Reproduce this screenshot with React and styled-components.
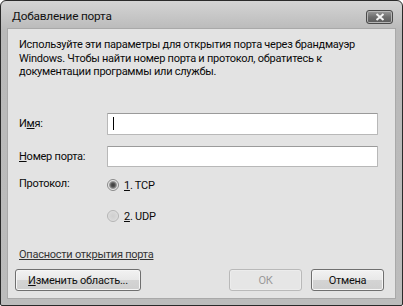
import React from "react";
import styled, { createGlobalStyle } from "styled-components";

const Global = createGlobalStyle`
  html, body { margin: 0; padding: 0; background: #ffffff; }
  body { font-family: Roboto, "Liberation Sans", sans-serif; }
`;

const Window = styled.div`
  box-sizing: border-box;
  width: 403px;
  height: 306px;
  border: 1px solid #2a2a2a;
  border-radius: 6px 6px 2px 2px;
  background: linear-gradient(#d4d4d4, #b9b9b9 30px, #bcbcbc);
  display: flex;
  flex-direction: column;
  overflow: hidden;
`;

const TitleBar = styled.div`
  height: 27px;
  display: flex;
  align-items: center;
  justify-content: space-between;
  padding: 0 9px 0 11px;
`;

const Title = styled.span`
  font-size: 11.8px;
  letter-spacing: -0.2px;
  color: #111;
  margin-top: 2px;
`;

const CloseBtn = styled.div`
  width: 25px;
  height: 12px;
  border: 1px solid #4a4a4a;
  border-radius: 3px;
  background: linear-gradient(#9a9a9a, #6e6e6e 50%, #5a5a5a);
  display: flex;
  align-items: center;
  justify-content: center;
  margin-top: 4px;
  box-shadow: inset 0 0 0 1px #b5b5b5;
`;

const Client = styled.div`
  flex: 1;
  margin: 0 6px 6px 6px;
  background: #e3e3e3;
  border: 1px solid #a9a9a9;
  display: flex;
  flex-direction: column;
  padding: 9px 11px 7px 11px;
  font-size: 11px;
  letter-spacing: -0.25px;
  color: #0a0a0a;
`;

const Intro = styled.p`
  margin: 0;
  line-height: 13.5px;
`;

const Form = styled.div`
  margin-top: 34px;
  display: grid;
  grid-template-columns: 88px 271px;
  row-gap: 11px;
  align-items: center;
`;

const Label = styled.span``;

const Ul = styled.span`
  text-decoration: underline;
`;

const Input = styled.div`
  box-sizing: border-box;
  height: ${(p) => p.$h}px;
  background: #ffffff;
  border: 1px solid #b8b8b8;
  border-top-color: #9a9a9a;
  border-radius: 1px;
  display: flex;
  align-items: center;
  padding-left: 5px;
`;

const Caret = styled.span`
  width: 1px;
  height: 13px;
  background: #000;
`;

const ProtoRow = styled.div`
  display: grid;
  grid-template-columns: 88px 1fr;
  margin-top: 9px;
`;

const ProtoLabel = styled.span`
  margin-top: 1px;
`;

const RadioList = styled.div`
  display: flex;
  flex-direction: column;
  gap: 18px;
  margin-top: 3px;
`;

const RadioItem = styled.label`
  display: flex;
  align-items: center;
  gap: 5px;
`;

const RadioCircle = styled.span`
  box-sizing: border-box;
  width: 12px;
  height: 12px;
  border-radius: 50%;
  border: 1px solid ${(p) => (p.$checked ? "#8a8a8a" : "#b4b4b4")};
  background: ${(p) => (p.$checked ? "radial-gradient(circle, #3a3a3a 0, #555 2px, #9a9a9a 3.5px, #e8e8e8 4.5px)" : "radial-gradient(circle, #cfcfcf 0, #d8d8d8 4px, #eaeaea 6px)")};
`;

const Spacer = styled.div`
  flex: 1;
`;

const Link = styled.a`
  color: #333;
  text-decoration: underline;
  align-self: flex-start;
  margin-bottom: 8px;
`;

const ButtonRow = styled.div`
  display: flex;
  align-items: center;
  gap: 9px;
  margin-left: -4px;
`;

const Button = styled.div`
  box-sizing: border-box;
  width: ${(p) => p.$w}px;
  height: 22px;
  border: 1px solid ${(p) => (p.$disabled ? "#b9b9b9" : "#6f6f6f")};
  border-radius: 3px;
  background: ${(p) =>
    p.$disabled
      ? "#e6e6e6"
      : "linear-gradient(#f2f2f2, #e8e8e8 50%, #d4d4d4 51%, #cfcfcf)"};
  color: ${(p) => (p.$disabled ? "#9a9a9a" : "#111")};
  display: flex;
  align-items: center;
  justify-content: center;
  box-shadow: inset 0 0 0 1px ${(p) => (p.$disabled ? "#ececec" : "#f6f6f6")};
`;

const Gap = styled.div`
  flex: 1;
`;

export default function App() {
  return (
    <>
      <Global />
      <Window>
        <TitleBar>
          <Title>Добавление порта</Title>
          <CloseBtn>
            <svg width="10" height="8" viewBox="0 0 10 8">
              <path d="M1.5 1 L8.5 7 M8.5 1 L1.5 7" stroke="#f4f4f4" strokeWidth="2" />
            </svg>
          </CloseBtn>
        </TitleBar>
        <Client>
          <Intro>
            Используйте эти параметры для открытия порта через брандмауэр
            Windows. Чтобы найти номер порта и протокол, обратитесь к
            документации программы или службы.
          </Intro>
          <Form>
            <Label>
              И<Ul>м</Ul>я:
            </Label>
            <Input $h={22}>
              <Caret />
            </Input>
            <Label>
              <Ul>Н</Ul>омер порта:
            </Label>
            <Input $h={21} />
          </Form>
          <ProtoRow>
            <ProtoLabel>Протокол:</ProtoLabel>
            <RadioList>
              <RadioItem>
                <RadioCircle $checked />
                <span>
                  <Ul>1</Ul>. TCP
                </span>
              </RadioItem>
              <RadioItem>
                <RadioCircle />
                <span>
                  <Ul>2</Ul>. UDP
                </span>
              </RadioItem>
            </RadioList>
          </ProtoRow>
          <Spacer />
          <Link>Опасности открытия порта</Link>
          <ButtonRow>
            <Button $w={126}>
              <span>
                <Ul>И</Ul>зменить область...
              </span>
            </Button>
            <Gap />
            <Button $w={73} $disabled>
              ОК
            </Button>
            <Button $w={73}>Отмена</Button>
          </ButtonRow>
        </Client>
      </Window>
    </>
  );
}
